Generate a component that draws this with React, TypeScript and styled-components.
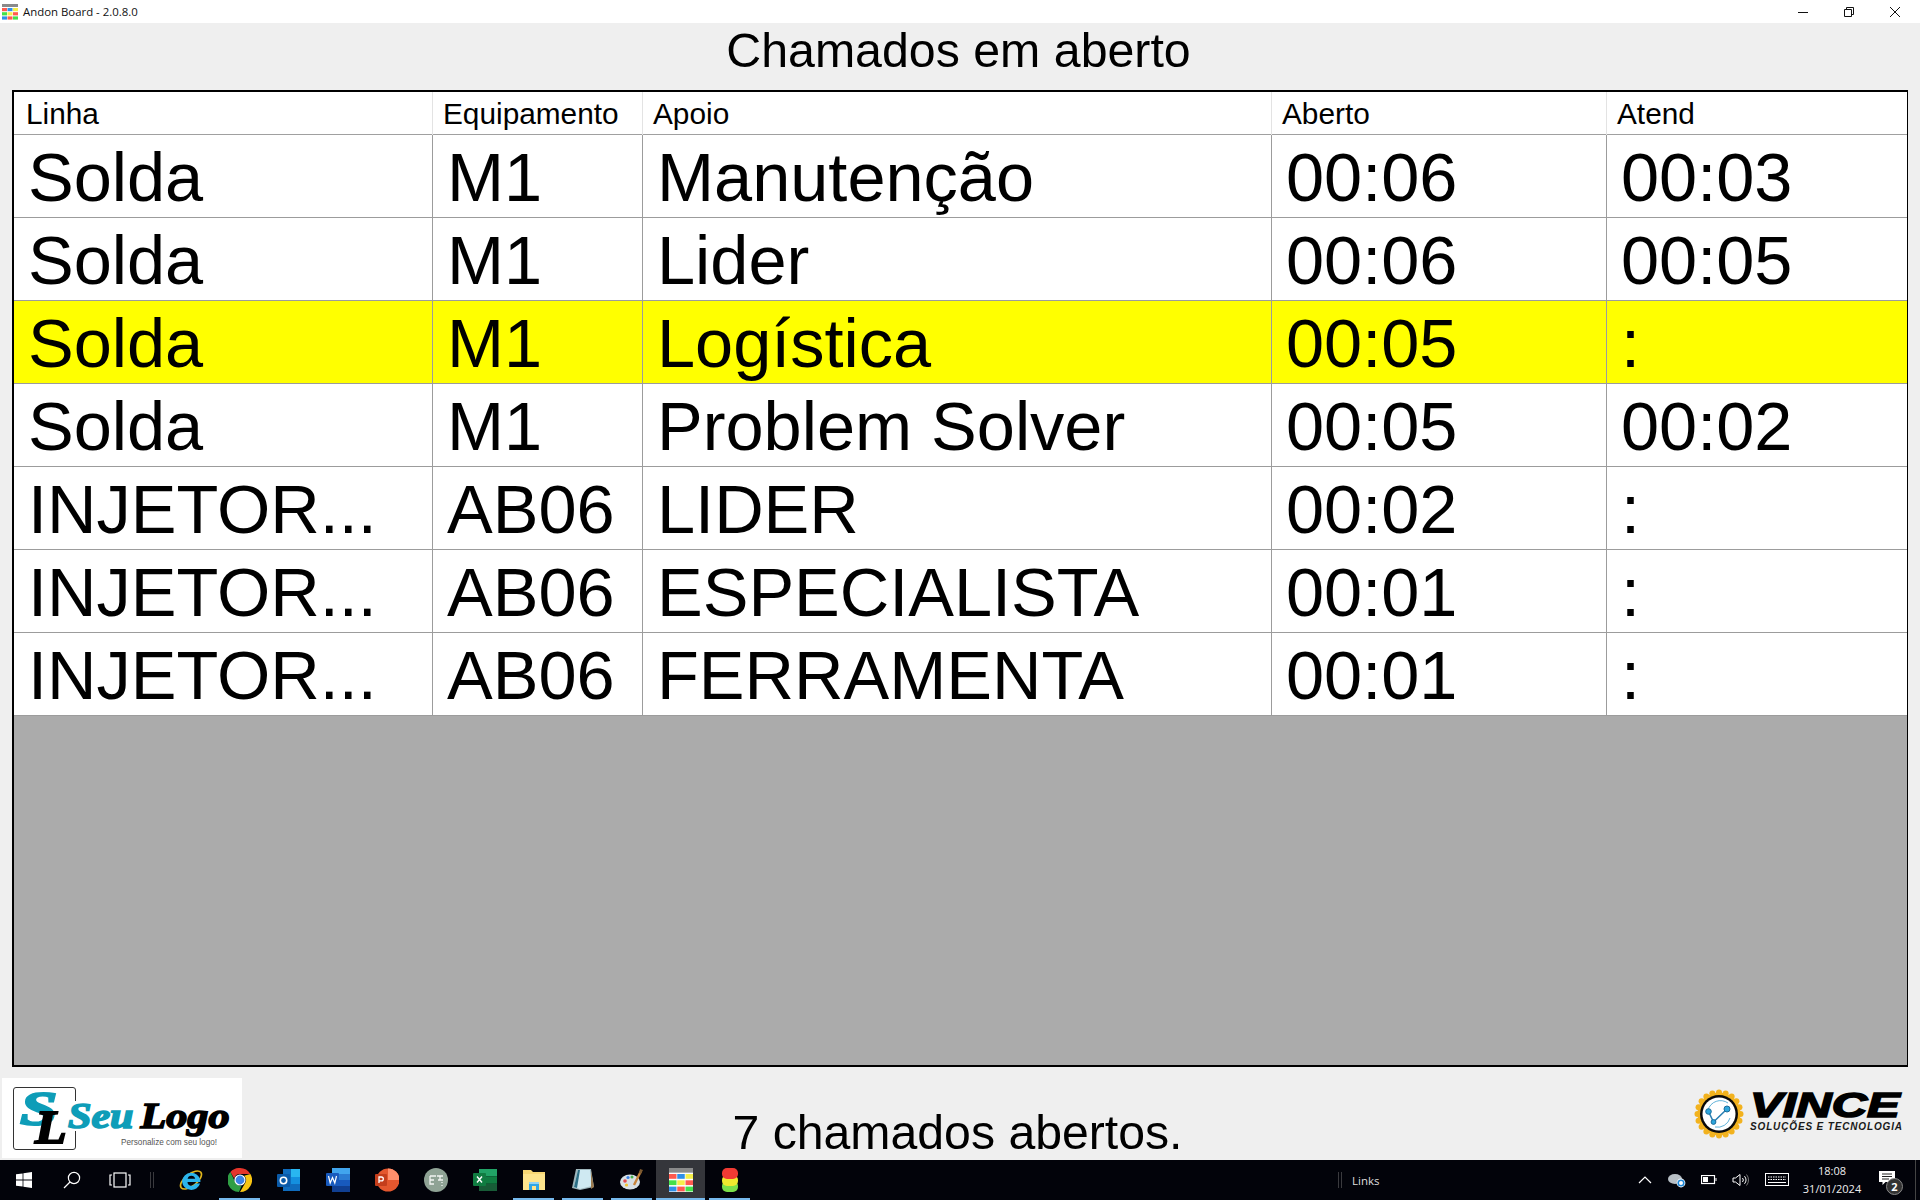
import styled, { createGlobalStyle } from 'styled-components';

const GlobalStyle = createGlobalStyle`
  html, body {
    margin: 0;
    padding: 0;
    background: #efefef;
    overflow: hidden;
  }
  * {
    box-sizing: border-box;
  }
`;

const calls = [
  { linha: 'Solda', equip: 'M1', apoio: 'Manutenção', aberto: '00:06', atend: '00:03' },
  { linha: 'Solda', equip: 'M1', apoio: 'Lider', aberto: '00:06', atend: '00:05' },
  { linha: 'Solda', equip: 'M1', apoio: 'Logística', aberto: '00:05', atend: ':', alert: true },
  { linha: 'Solda', equip: 'M1', apoio: 'Problem Solver', aberto: '00:05', atend: '00:02' },
  { linha: 'INJETOR...', equip: 'AB06', apoio: 'LIDER', aberto: '00:02', atend: ':' },
  { linha: 'INJETOR...', equip: 'AB06', apoio: 'ESPECIALISTA', aberto: '00:01', atend: ':' },
  { linha: 'INJETOR...', equip: 'AB06', apoio: 'FERRAMENTA', aberto: '00:01', atend: ':' },
];

function AndonIcon({ size = 16 }: { size?: number }) {
  const colors = ['#ff5a4f', '#2f8fe8', '#f5ef4a', '#43e04a', '#f5ef4a', '#ff5a4f', '#2f8fe8', '#ff5a4f', '#43e04a'];
  return (
    <svg width={size} height={size} viewBox="0 0 16 16">
      <rect x="0" y="0" width="16" height="3" fill="#8a8a8a" />
      <rect x="0" y="3" width="16" height="13" fill="#fff" />
      {colors.map((c, i) => (
        <rect key={i} x={(i % 3) * 5.5} y={4 + Math.floor(i / 3) * 4.2} width="5" height="3.2" fill={c} />
      ))}
    </svg>
  );
}

function SealIcon() {
  const teeth = Array.from({ length: 20 }, (_, i) => (i * Math.PI) / 10);
  return (
    <svg width="50" height="50" viewBox="0 0 50 50">
      {teeth.map((a, i) => (
        <circle key={i} cx={25 + 21.5 * Math.cos(a)} cy={25 + 21.5 * Math.sin(a)} r="3" fill="#f2b21e" />
      ))}
      <circle cx="25" cy="25" r="21.5" fill="#f2b21e" />
      <circle cx="25" cy="25" r="19" fill="#0a0a0a" />
      <circle cx="25" cy="25" r="16.5" fill="#fff" />
      <path d="M14 21a13 13 0 0 1 20-7M36 29a13 13 0 0 1-15 9" fill="none" stroke="#3aa0cf" strokeWidth="0.8" />
      <path d="M14.5 22.5 L19.5 33 L33 20" fill="none" stroke="#2a7fb2" strokeWidth="1.6" />
      <circle cx="14.5" cy="22.5" r="2.8" fill="#2ea6dc" stroke="#1b6c9a" />
      <circle cx="19.5" cy="33" r="2.4" fill="#2ea6dc" stroke="#1b6c9a" />
      <circle cx="33" cy="20" r="3" fill="#2ea6dc" stroke="#1b6c9a" />
    </svg>
  );
}

function App() {
  return (
    <StApp>
      <GlobalStyle />
      <StTitleBar>
        <StWindowTitle>
          <AndonIcon />
          <span>Andon Board - 2.0.8.0</span>
        </StWindowTitle>
        <StWindowButtons>
          <StWindowButton>
            <svg width="12" height="12" viewBox="0 0 12 12">
              <path d="M1 6.5h10" stroke="#111" fill="none" />
            </svg>
          </StWindowButton>
          <StWindowButton>
            <svg width="12" height="12" viewBox="0 0 12 12">
              <path d="M1.5 3.5h7v7h-7zM3.5 3.5v-2h7v7h-2" stroke="#111" fill="none" />
            </svg>
          </StWindowButton>
          <StWindowButton>
            <svg width="12" height="12" viewBox="0 0 12 12">
              <path d="M1 1l10 10M11 1L1 11" stroke="#111" fill="none" />
            </svg>
          </StWindowButton>
        </StWindowButtons>
      </StTitleBar>

      <StHeading>Chamados em aberto</StHeading>

      <StBoard>
        <StHeaderRow>
          <StHeaderCell>Linha</StHeaderCell>
          <StHeaderCell>Equipamento</StHeaderCell>
          <StHeaderCell>Apoio</StHeaderCell>
          <StHeaderCell>Aberto</StHeaderCell>
          <StHeaderCell>Atend</StHeaderCell>
        </StHeaderRow>
        {calls.map((call, i) => (
          <StRow key={i} $alert={call.alert}>
            <StCell>{call.linha}</StCell>
            <StCell>{call.equip}</StCell>
            <StCell>{call.apoio}</StCell>
            <StCell>{call.aberto}</StCell>
            <StCell>{call.atend}</StCell>
          </StRow>
        ))}
      </StBoard>

      <StFooter>
        <StClientLogo>
          <StLogoFrame />
          <StLogoWords>
            <StLogoSeu>Seu</StLogoSeu> <StLogoGo>Logo</StLogoGo>
          </StLogoWords>
          <StLogoS>S</StLogoS>
          <StLogoL>L</StLogoL>
          <StLogoCaption>Personalize com seu logo!</StLogoCaption>
        </StClientLogo>
        <StCount>7 chamados abertos.</StCount>
        <StVinceLogo>
          <SealIcon />
          <StVinceText>
            <StVinceName>VINCE</StVinceName>
            <StVinceTagline>SOLUÇÕES E TECNOLOGIA</StVinceTagline>
          </StVinceText>
        </StVinceLogo>
      </StFooter>

      <StTaskbar>
        <StStartGroup>
          <StTaskSlot>
            <svg width="16" height="16" viewBox="0 0 16 16" fill="#fff">
              <path d="M0 2.3l6.6-.9v6.2H0zM7.4 1.3L16 0v7.6H7.4zM0 8.4h6.6v6.2L0 13.7zM7.4 8.4H16V16l-8.6-1.2z" />
            </svg>
          </StTaskSlot>
          <StTaskSlot>
            <svg width="18" height="18" viewBox="0 0 18 18" fill="none" stroke="#fff" strokeWidth="1.2">
              <circle cx="11" cy="7" r="5.6" />
              <path d="M7 11l-6 6" />
            </svg>
          </StTaskSlot>
          <StTaskSlot>
            <svg width="22" height="16" viewBox="0 0 22 16" fill="none" stroke="#fff" strokeWidth="1.2">
              <rect x="5" y="1" width="12" height="14" />
              <path d="M3 3H1v10h2M19 3h2v10h-2" />
            </svg>
          </StTaskSlot>
          <StSeparator />
        </StStartGroup>

        <StApps>
          <StAppSlot>
            <svg width="26" height="26" viewBox="0 0 26 26">
              <ellipse cx="13" cy="13" rx="12.5" ry="6" fill="none" stroke="#e2b71c" strokeWidth="1.6" transform="rotate(-38 13 13)" />
              <path d="M4 14.5a9.3 9.3 0 0 1 18.4-1.2v1.6H9.5a4 4 0 0 0 7.6 1.6h5a9.3 9.3 0 0 1-18.1-2zm5.6-2.7h7.6a3.9 3.9 0 0 0-7.6 0z" fill="#2cb5ec" />
            </svg>
          </StAppSlot>
          <StAppSlot $open>
            <svg width="24" height="24" viewBox="0 0 24 24">
              <path d="M12 0a12 12 0 0 1 10.4 6H12a6 6 0 0 0-5.8 4.4L2.4 4A12 12 0 0 1 12 0z" fill="#e5352b" />
              <path d="M22.4 6A12 12 0 0 1 12 24l5.2-9A6 6 0 0 0 16.2 7.7z" fill="#f9c513" />
              <path d="M2.4 4L7.6 15A6 6 0 0 0 13.6 17.8L11 24A12 12 0 0 1 2.4 4z" fill="#2f9e44" />
              <circle cx="12" cy="12" r="5.6" fill="#fff" />
              <circle cx="12" cy="12" r="4.4" fill="#3b82e6" />
            </svg>
          </StAppSlot>
          <StAppSlot>
            <svg width="24" height="24" viewBox="0 0 24 24">
              <rect x="6" y="1" width="17" height="22" fill="#0f6cbd" />
              <rect x="14" y="1" width="9" height="8" fill="#29b6f0" />
              <rect x="14" y="9" width="9" height="7" fill="#1490df" />
              <rect x="0" y="6" width="13" height="13" rx="1" fill="#0a5aa8" />
              <circle cx="6.5" cy="12.5" r="3.2" fill="none" stroke="#fff" strokeWidth="1.6" />
            </svg>
          </StAppSlot>
          <StAppSlot>
            <svg width="24" height="24" viewBox="0 0 24 24">
              <rect x="6" y="0" width="18" height="6" fill="#41a5ee" />
              <rect x="6" y="6" width="18" height="6" fill="#2b7cd3" />
              <rect x="6" y="12" width="18" height="6" fill="#185abd" />
              <rect x="6" y="18" width="18" height="6" fill="#103f91" />
              <rect x="0" y="5" width="13" height="13" rx="1" fill="#185abd" />
              <path d="M2.5 8l1.7 7 2.3-5.5L8.8 15l1.7-7" fill="none" stroke="#fff" strokeWidth="1.2" />
            </svg>
          </StAppSlot>
          <StAppSlot>
            <svg width="24" height="24" viewBox="0 0 24 24">
              <circle cx="13" cy="12" r="11.5" fill="#e4572e" />
              <path d="M13 .5A11.5 11.5 0 0 1 24.5 12H13z" fill="#ff8f6b" />
              <rect x="0" y="6" width="12" height="12" rx="1" fill="#c43e1c" />
              <path d="M4 15V9h2.4a1.8 1.8 0 0 1 0 3.8H4" fill="none" stroke="#fff" strokeWidth="1.3" />
            </svg>
          </StAppSlot>
          <StAppSlot>
            <svg width="24" height="24" viewBox="0 0 24 24">
              <circle cx="12" cy="12" r="12" fill="#8fa395" />
              <path d="M6 8h6M6 8v8h4M6 12h4M13 8h6M16 8v4M14 12h5M18 14v1M18 17v1" fill="none" stroke="#f2f5f2" strokeWidth="1.3" />
            </svg>
          </StAppSlot>
          <StAppSlot>
            <svg width="24" height="24" viewBox="0 0 24 24">
              <rect x="6" y="1" width="18" height="7.4" fill="#21a366" />
              <rect x="6" y="8.4" width="18" height="7.4" fill="#107c41" />
              <rect x="6" y="15.8" width="18" height="7.2" fill="#185c37" />
              <rect x="0" y="5" width="13" height="13" rx="1" fill="#107c41" />
              <path d="M4 8.5l5 6M9 8.5l-5 6" stroke="#fff" strokeWidth="1.4" />
            </svg>
          </StAppSlot>
          <StAppSlot $open>
            <svg width="24" height="22" viewBox="0 0 24 22">
              <path d="M1 1h8l2 2h12v18H1z" fill="#f7d774" />
              <path d="M1 5h22v16H1z" fill="#fde48c" />
              <path d="M7 21v-8h10v8h-3v-4h-4v4z" fill="#2ea6e6" />
              <rect x="7" y="13" width="10" height="2" fill="#8fd3f4" />
            </svg>
          </StAppSlot>
          <StAppSlot $open>
            <svg width="24" height="24" viewBox="0 0 24 24">
              <path d="M5 1h15l3 18-14 3L1 20z" fill="#9fb7bd" />
              <path d="M7 2h12l2 16-12 3-6-2z" fill="#cfe9f2" />
              <path d="M3 19l4-17 2 0-3 18z" fill="#2c6f86" />
              <path d="M20 3l3 16-3 2z" fill="#9a7a50" />
            </svg>
          </StAppSlot>
          <StAppSlot $open>
            <svg width="24" height="24" viewBox="0 0 24 24">
              <ellipse cx="10" cy="14" rx="10" ry="7.6" fill="#d7dfe4" />
              <circle cx="5" cy="13" r="1.8" fill="#e5484d" />
              <circle cx="8" cy="9.5" r="1.6" fill="#3b82e6" />
              <circle cx="12" cy="9" r="1.5" fill="#43b04a" />
              <circle cx="6.5" cy="17" r="1.6" fill="#f2c12e" />
              <path d="M14 17L21 3" stroke="#c8843a" strokeWidth="2.4" />
              <path d="M20 1l3 1-2 4-2-1z" fill="#7d5a30" />
            </svg>
          </StAppSlot>
          <StAppSlot $open $active>
            <AndonIcon size={24} />
          </StAppSlot>
          <StAppSlot $open>
            <svg width="18" height="26" viewBox="0 0 18 26">
              <rect x="1" y="14" width="16" height="11" rx="5" fill="#7ce04a" />
              <rect x="1" y="8" width="16" height="11" rx="5" fill="#f0ea2e" />
              <rect x="1" y="1" width="16" height="11" rx="5" fill="#f03a33" />
            </svg>
          </StAppSlot>
        </StApps>

        <StLinksGroup>
          <StSeparator />
          <StLinks>Links</StLinks>
        </StLinksGroup>

        <StTray>
          <StTrayIcon $width={32}>
            <svg width="14" height="8" viewBox="0 0 14 8" fill="none" stroke="#fff" strokeWidth="1.2">
              <path d="M1 7l6-6 6 6" />
            </svg>
          </StTrayIcon>
          <StTrayIcon $width={32}>
            <svg width="18" height="16" viewBox="0 0 18 16">
              <ellipse cx="7" cy="7" rx="7" ry="5" fill="#b8c0c6" />
              <circle cx="13" cy="11" r="4.4" fill="#fff" />
              <circle cx="13" cy="11" r="2.8" fill="none" stroke="#1e88d8" strokeWidth="1.6" />
            </svg>
          </StTrayIcon>
          <StTrayIcon $width={32}>
            <svg width="16" height="10" viewBox="0 0 16 10" fill="none" stroke="#fff">
              <rect x="0.5" y="0.5" width="13" height="8" strokeWidth="1.2" />
              <rect x="2" y="2" width="5" height="5" fill="#fff" stroke="none" />
              <path d="M15 3v3" />
            </svg>
          </StTrayIcon>
          <StTrayIcon $width={32}>
            <svg width="18" height="14" viewBox="0 0 18 14" fill="none" stroke="#fff">
              <path d="M1 5v4h2.5L8 12.5v-11L3.5 5z" />
              <path d="M10.5 5a3 3 0 0 1 0 4M12.5 3.2a6 6 0 0 1 0 7.6" />
              <path d="M14.5 1.5a8.5 8.5 0 0 1 0 11" stroke="#777" />
            </svg>
          </StTrayIcon>
          <StTrayIcon $width={40}>
            <svg width="24" height="14" viewBox="0 0 24 14" fill="none" stroke="#fff">
              <rect x="0.5" y="0.5" width="23" height="12" />
              <path d="M3 4h18M3 6.5h18" strokeDasharray="1.5 1" />
              <path d="M3 9.5h18" />
            </svg>
          </StTrayIcon>
          <StClock>
            <span>18:08</span>
            <span>31/01/2024</span>
          </StClock>
          <StNotification>
            <svg width="16" height="15" viewBox="0 0 16 15" fill="#fff">
              <path d="M0 0h16v11H6.5L3.5 14v-3H0z" />
              <path d="M3 3h10M3 5.5h10M3 8h7" stroke="#222" strokeWidth="1" />
            </svg>
            <StBadge>2</StBadge>
          </StNotification>
          <StShowDesktop />
        </StTray>
      </StTaskbar>
    </StApp>
  );
}

const StApp = styled.div`
  display: flex;
  flex-direction: column;
  width: 1920px;
  height: 1200px;
  background-color: #efefef;
  font-family: 'Liberation Sans', Arial, sans-serif;
  color: #000;
`;

const StTitleBar = styled.div`
  display: flex;
  justify-content: space-between;
  align-items: center;
  height: 23px;
  flex-shrink: 0;
  background-color: #fff;
`;
const StWindowTitle = styled.div`
  display: flex;
  align-items: center;
  gap: 5px;
  padding-left: 2px;
  font-family: 'Open Sans', sans-serif;
  font-size: 11.4px;
  line-height: 23px;
  color: #111;
`;
const StWindowButtons = styled.div`
  display: flex;
  padding-right: 2px;
`;
const StWindowButton = styled.div`
  display: flex;
  justify-content: center;
  align-items: center;
  width: 46px;
  height: 21px;
`;

const StHeading = styled.h1`
  margin: 0;
  height: 67px;
  padding-right: 3px;
  flex-shrink: 0;
  font-size: 48.3px;
  font-weight: 400;
  line-height: 55px;
  text-align: center;
`;

const StBoard = styled.div`
  display: flex;
  flex-direction: column;
  width: 1896px;
  height: 977px;
  flex-shrink: 0;
  margin-left: 12px;
  border: 2px solid #000;
  border-width: 2px 1px 2px 2px;
  background-color: #ababab;
`;

const COLUMNS = '419px 210px 629px 335px 1fr';

const StHeaderRow = styled.div`
  display: grid;
  grid-template-columns: ${COLUMNS};
  height: 43px;
  background-color: #fff;
  border-bottom: 1px solid #a0a0a0;
`;
const StHeaderCell = styled.div`
  padding-left: 10px;
  font-size: 29.8px;
  line-height: 43px;
  border-right: 1px solid #e3e3e3;
  white-space: nowrap;
  &:first-child {
    padding-left: 12px;
  }
  &:last-child {
    border-right: none;
  }
`;

const StRow = styled.div<{ $alert?: boolean }>`
  display: grid;
  grid-template-columns: ${COLUMNS};
  height: 83px;
  background-color: ${({ $alert }) => ($alert ? '#ffff00' : '#fff')};
  border-bottom: 1px solid #9c9c9c;
`;
const StCell = styled.div`
  padding-left: 14px;
  font-size: 68.5px;
  line-height: 85px;
  border-right: 1px solid #9c9c9c;
  white-space: nowrap;
  overflow: hidden;
  &:last-child {
    border-right: none;
  }
`;

const StFooter = styled.div`
  display: grid;
  grid-template-columns: 1fr auto 1fr;
  height: 93px;
  flex-shrink: 0;
  padding-top: 11px;
`;
const StClientLogo = styled.div`
  position: relative;
  width: 240px;
  height: 80px;
  margin-left: 2px;
  background-color: #fff;
`;
const StLogoFrame = styled.div`
  position: absolute;
  left: 11px;
  top: 9px;
  width: 63px;
  height: 63px;
  border: 1px solid #333;
  border-radius: 3px;
`;
const StLogoS = styled.span`
  position: absolute;
  left: 18px;
  top: 14px;
  font-family: 'Liberation Serif', serif;
  font-size: 48px;
  font-weight: 700;
  font-style: italic;
  line-height: 34px;
  color: #0e9db8;
  transform: scaleX(1.4);
  transform-origin: left center;
  -webkit-text-stroke: 2px #0e9db8;
`;
const StLogoL = styled.span`
  position: absolute;
  left: 33px;
  top: 33px;
  font-family: 'Liberation Serif', serif;
  font-size: 47px;
  font-weight: 700;
  font-style: italic;
  line-height: 33px;
  color: #000;
  transform: scaleX(1.1);
  transform-origin: left center;
  -webkit-text-stroke: 2px #000;
`;
const StLogoWords = styled.div`
  position: absolute;
  left: 66px;
  top: 23px;
  height: 30px;
  padding-right: 2px;
  background-color: #fff;
  font-family: 'Liberation Serif', serif;
  font-size: 36px;
  font-weight: 700;
  font-style: italic;
  line-height: 30px;
  white-space: nowrap;
  transform: scaleX(1.17);
  transform-origin: left center;
`;
const StLogoSeu = styled.span`
  color: #0e9db8;
  -webkit-text-stroke: 1.6px #0e9db8;
`;
const StLogoGo = styled.span`
  margin-left: -3px;
  color: #000;
  -webkit-text-stroke: 1.6px #000;
`;
const StLogoCaption = styled.div`
  position: absolute;
  left: 119px;
  top: 60px;
  font-size: 8.2px;
  color: #555;
  white-space: nowrap;
`;

const StCount = styled.div`
  padding: 27px 5px 0 0;
  font-size: 48.2px;
  line-height: 54px;
  white-space: nowrap;
`;
const StVinceLogo = styled.div`
  display: flex;
  justify-content: flex-end;
  gap: 6px;
  padding: 11px 18px 0 0;
`;
const StVinceText = styled.div`
  display: flex;
  flex-direction: column;
  width: 152px;
  padding-top: 1px;
`;
const StVinceName = styled.div`
  font-size: 35px;
  font-weight: 700;
  font-style: italic;
  line-height: 30px;
  white-space: nowrap;
  transform: scaleX(1.4);
  transform-origin: left center;
  -webkit-text-stroke: 1.6px #000;
`;
const StVinceTagline = styled.div`
  margin-top: 1px;
  font-size: 10px;
  font-weight: 700;
  font-style: italic;
  line-height: 11px;
  letter-spacing: 0.85px;
  white-space: nowrap;
  color: #1a1a1a;
`;

const StTaskbar = styled.div`
  display: flex;
  align-items: stretch;
  height: 40px;
  flex-shrink: 0;
  background-color: #02030a;
  color: #fff;
  font-family: 'Open Sans', sans-serif;
`;
const StStartGroup = styled.div`
  display: flex;
  align-items: center;
`;
const StTaskSlot = styled.div`
  display: flex;
  justify-content: center;
  align-items: center;
  width: 48px;
  height: 40px;
`;
const StSeparator = styled.div`
  width: 4px;
  height: 16px;
  margin-left: 6px;
  border-left: 1px solid #3a3a3e;
  border-right: 1px solid #3a3a3e;
`;
const StApps = styled.div`
  display: flex;
  margin-left: 12px;
`;
const StAppSlot = styled.div<{ $open?: boolean; $active?: boolean }>`
  position: relative;
  display: flex;
  justify-content: center;
  align-items: center;
  width: 49px;
  height: 40px;
  background-color: ${({ $active }) => ($active ? '#35363b' : 'transparent')};
  &::after {
    content: '';
    display: ${({ $open }) => ($open ? 'block' : 'none')};
    position: absolute;
    left: ${({ $active }) => ($active ? '0' : '4px')};
    right: ${({ $active }) => ($active ? '0' : '4px')};
    bottom: 0;
    height: 2px;
    background-color: #76b9ed;
  }
`;
const StLinksGroup = styled.div`
  display: flex;
  align-items: center;
  gap: 10px;
  margin-left: 578px;
`;
const StLinks = styled.span`
  font-size: 11.5px;
  color: #ddd;
`;
const StTray = styled.div`
  display: flex;
  align-items: center;
  margin-left: auto;
`;
const StTrayIcon = styled.div<{ $width: number }>`
  display: flex;
  justify-content: center;
  align-items: center;
  width: ${({ $width }) => $width}px;
  height: 40px;
`;
const StClock = styled.div`
  display: flex;
  flex-direction: column;
  align-items: center;
  width: 74px;
  padding-right: 4px;
  font-size: 11px;
  line-height: 18px;
  color: #eee;
`;
const StNotification = styled.div`
  position: relative;
  display: flex;
  justify-content: center;
  align-items: center;
  width: 44px;
  height: 40px;
  padding: 0 12px 3px 0;
`;
const StBadge = styled.span`
  position: absolute;
  left: 15px;
  top: 18px;
  width: 17px;
  height: 17px;
  border: 1px solid #888;
  border-radius: 50%;
  background-color: #333;
  font-size: 11px;
  font-weight: 700;
  line-height: 15px;
  text-align: center;
`;
const StShowDesktop = styled.div`
  width: 1px;
  height: 40px;
  margin: 0 4px 0 0;
  background-color: #444;
`;

export default App;
